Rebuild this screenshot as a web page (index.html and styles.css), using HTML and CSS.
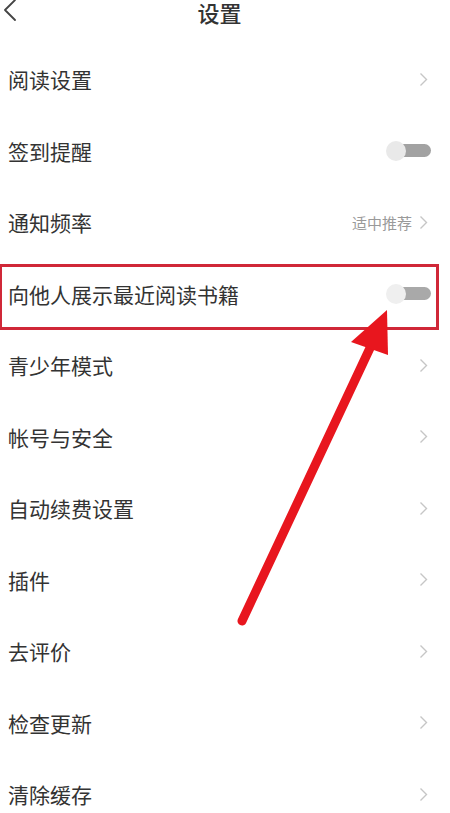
FILE: index.html
```html
<!DOCTYPE html>
<html lang="zh-CN">
<head>
<meta charset="utf-8">
<title>设置</title>
<link rel="stylesheet" href="styles.css">
</head>
<body>
<div class="page">
  <header class="header">
    <svg class="back" width="14" height="24" viewBox="0 0 14 24"><polyline points="12,1 2,11 12,21" fill="none" stroke="#444" stroke-width="1.8" stroke-linecap="round" stroke-linejoin="round"/></svg>
    <h1 class="title">设置</h1>
  </header>
  <ul class="list">
    <li class="row"><span class="label">阅读设置</span><span class="chev"><svg width="9" height="15" viewBox="0 0 9 15"><polyline points="1.5,1.5 7.5,7.5 1.5,13.5" fill="none" stroke="#c6c6c6" stroke-width="1.4"/></svg></span></li>
    <li class="row"><span class="label">签到提醒</span><span class="toggle"><span class="knob"></span></span></li>
    <li class="row"><span class="label">通知频率</span><span class="value">适中推荐</span><span class="chev"><svg width="9" height="15" viewBox="0 0 9 15"><polyline points="1.5,1.5 7.5,7.5 1.5,13.5" fill="none" stroke="#c6c6c6" stroke-width="1.4"/></svg></span></li>
    <li class="row highlight"><span class="label">向他人展示最近阅读书籍</span><span class="toggle light"><span class="knob"></span></span><span class="mark"></span></li>
    <li class="row"><span class="label">青少年模式</span><span class="chev"><svg width="9" height="15" viewBox="0 0 9 15"><polyline points="1.5,1.5 7.5,7.5 1.5,13.5" fill="none" stroke="#c6c6c6" stroke-width="1.4"/></svg></span></li>
    <li class="row"><span class="label">帐号与安全</span><span class="chev"><svg width="9" height="15" viewBox="0 0 9 15"><polyline points="1.5,1.5 7.5,7.5 1.5,13.5" fill="none" stroke="#c6c6c6" stroke-width="1.4"/></svg></span></li>
    <li class="row"><span class="label">自动续费设置</span><span class="chev"><svg width="9" height="15" viewBox="0 0 9 15"><polyline points="1.5,1.5 7.5,7.5 1.5,13.5" fill="none" stroke="#c6c6c6" stroke-width="1.4"/></svg></span></li>
    <li class="row"><span class="label">插件</span><span class="chev"><svg width="9" height="15" viewBox="0 0 9 15"><polyline points="1.5,1.5 7.5,7.5 1.5,13.5" fill="none" stroke="#c6c6c6" stroke-width="1.4"/></svg></span></li>
    <li class="row"><span class="label">去评价</span><span class="chev"><svg width="9" height="15" viewBox="0 0 9 15"><polyline points="1.5,1.5 7.5,7.5 1.5,13.5" fill="none" stroke="#c6c6c6" stroke-width="1.4"/></svg></span></li>
    <li class="row"><span class="label">检查更新</span><span class="chev"><svg width="9" height="15" viewBox="0 0 9 15"><polyline points="1.5,1.5 7.5,7.5 1.5,13.5" fill="none" stroke="#c6c6c6" stroke-width="1.4"/></svg></span></li>
    <li class="row"><span class="label">清除缓存</span><span class="chev"><svg width="9" height="15" viewBox="0 0 9 15"><polyline points="1.5,1.5 7.5,7.5 1.5,13.5" fill="none" stroke="#c6c6c6" stroke-width="1.4"/></svg></span></li>
  </ul>
  <svg class="arrow" width="450" height="813" viewBox="0 0 450 813">
    <line x1="242" y1="621" x2="370" y2="348" stroke="#e8161e" stroke-width="9" stroke-linecap="round"/>
    <polygon points="387,310 351,342 388,355" fill="#e8161e"/>
  </svg>
</div>
</body>
</html>
```

FILE: styles.css
```css
* { box-sizing: border-box; }
html, body { margin: 0; padding: 0; background: #fff; }
body {
  font-family: "Noto Sans CJK SC", "Noto Sans", sans-serif;
  color: #2b2b2b;
}
.page {
  position: relative;
  width: 450px;
  height: 813px;
  overflow: hidden;
}
.header {
  height: 43.5px;
  display: flex;
  align-items: flex-start;
  position: relative;
}
.back {
  margin: -1px 0 0 3px;
  flex: none;
}
.title {
  flex: 1;
  margin: 0;
  padding-right: 28px;
  text-align: center;
  font-size: 22px;
  font-weight: 500;
  line-height: 24px;
  color: #333;
}
.list {
  list-style: none;
  margin: 0;
  padding: 0;
}
.row {
  position: relative;
  height: 71.5px;
  display: flex;
  align-items: center;
  padding: 0 19px 0 8px;
}
.label {
  flex: 1;
  font-size: 21px;
  line-height: 28px;
  color: #333;
}
.value {
  font-size: 15px;
  color: #9a9a9a;
  margin-right: 7px;
}
.chev {
  display: flex;
  align-items: center;
  margin-right: 3px;
}
.toggle {
  position: relative;
  width: 45px;
  height: 20px;
  display: flex;
  align-items: center;
}
.toggle::before {
  content: "";
  position: absolute;
  left: 4px;
  right: 0;
  top: 3.5px;
  height: 13px;
  border-radius: 7px;
  background: #a2a2a2;
}
.knob {
  position: relative;
  width: 20px;
  height: 20px;
  border-radius: 50%;
  background: #e9e9e9;
}
.toggle.light .knob { background: #efefef; }
.toggle.light::before { background: #a9a9a9; }
.mark {
  position: absolute;
  left: -1px;
  right: 11px;
  top: 6px;
  bottom: 0;
  border: 3px solid #d02838;
  pointer-events: none;
}
.arrow {
  position: absolute;
  left: 0;
  top: 0;
  pointer-events: none;
}
```
